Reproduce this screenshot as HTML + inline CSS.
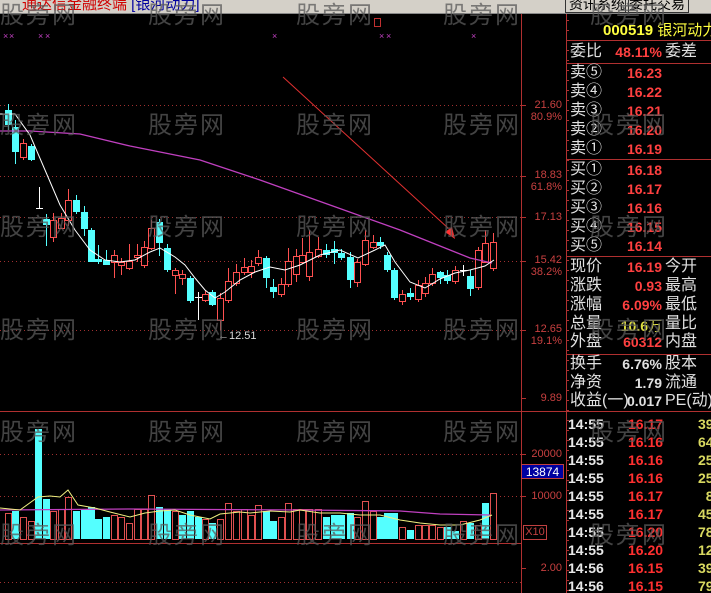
<!DOCTYPE html>
<html><head><meta charset="utf-8"><style>
html,body{margin:0;padding:0;background:#000;width:711px;height:593px;overflow:hidden}
body{position:relative;font-family:"Liberation Sans","Noto Sans CJK SC",sans-serif}
.t{position:absolute;white-space:nowrap}
svg{position:absolute;left:0;top:0}
.wm{position:absolute;color:rgba(90,90,90,0.75);font-size:24px;font-family:"Noto Sans CJK SC","WenQuanYi Zen Hei",sans-serif;letter-spacing:2px}
.r{position:absolute;left:570px;font-size:16px;color:#e0e0e0;font-family:"Liberation Sans","Noto Sans CJK SC",sans-serif;line-height:18px;height:18px}
.v{position:absolute;font-weight:bold;color:#ff4040;font-size:14px;text-align:right;width:70px;left:592px}
.tk{position:absolute;left:568px;font-weight:bold;font-size:14px;color:#e8e8e8;line-height:18px}
.tk b{position:absolute;left:60px;color:#ff3030}
.tk i{position:absolute;left:130px;color:#d8d860;font-style:normal}
.ax{position:absolute;color:#c84040;font-size:11px;text-align:right;width:38px;left:524px;line-height:12px}
</style></head><body>
<div style="position:absolute;left:0;top:0;width:711px;height:13px;background:#d4d0c8;border-bottom:1px solid #888;overflow:hidden">
 <div class="t" style="left:22px;top:-7px;font-size:15px;color:#d00000">通达信金融终端 <span style="color:#0000a0">[银河动力]</span></div>
 <div class="t" style="left:565px;top:-7px;font-size:14px;border:1px solid #333;padding:0 3px;height:18px">资讯系统</div>
 <div class="t" style="left:625px;top:-7px;font-size:14px;border:1px solid #333;padding:0 3px;height:18px">委托交易</div>
</div>
<svg width="711" height="593" id="s"></svg>
<div class="ax" style="top:99px">21.60<br>80.9%</div>
<div class="ax" style="top:169px">18.83<br>61.8%</div>
<div class="ax" style="top:211px">17.13</div>
<div class="ax" style="top:254px">15.42<br>38.2%</div>
<div class="ax" style="top:323px">12.65<br>19.1%</div>
<div class="ax" style="top:392px">9.89</div>
<div class="ax" style="top:448px">20000</div>
<div class="ax" style="top:490px">10000</div>
<div class="ax" style="top:562px">2.00</div>
<div class="t" style="left:521px;top:464px;width:43px;height:15px;background:#0000a0;border:1px solid #c04040;color:#fff;font-size:12px;line-height:15px;text-align:center;box-sizing:border-box">13874</div>
<div class="t" style="left:523px;top:525px;width:22px;height:13px;border:1px solid #c04040;color:#c04040;font-size:11px;line-height:12px;text-align:center">X10</div>
<div class="t" style="left:218px;top:330px;color:#ddd;font-size:11px">←12.51</div>
<div class="t" style="left:603px;top:19px;color:#ffff40;font-size:15px;font-weight:bold">000519 <span style="font-weight:normal">银河动力</span></div>
<div class="r" style="top:43px">委比</div><div class="v" style="top:44px;color:#ff4040">48.11%</div><div class="r" style="top:43px;left:665px">委差</div>
<div class="r" style="top:64px">卖⑤</div><div class="v" style="top:65px">16.23</div>
<div class="r" style="top:83px">卖④</div><div class="v" style="top:84px">16.22</div>
<div class="r" style="top:102px">卖③</div><div class="v" style="top:103px">16.21</div>
<div class="r" style="top:121px">卖②</div><div class="v" style="top:122px">16.20</div>
<div class="r" style="top:140px">卖①</div><div class="v" style="top:141px">16.19</div>
<div class="r" style="top:161px">买①</div><div class="v" style="top:162px">16.18</div>
<div class="r" style="top:180px">买②</div><div class="v" style="top:181px">16.17</div>
<div class="r" style="top:199px">买③</div><div class="v" style="top:200px">16.16</div>
<div class="r" style="top:218px">买④</div><div class="v" style="top:219px">16.15</div>
<div class="r" style="top:237px">买⑤</div><div class="v" style="top:238px">16.14</div>
<div class="r" style="top:258px">现价</div><div class="v" style="top:259px">16.19</div><div class="r" style="top:258px;left:665px">今开</div>
<div class="r" style="top:277px">涨跌</div><div class="v" style="top:278px">0.93</div><div class="r" style="top:277px;left:665px">最高</div>
<div class="r" style="top:296px">涨幅</div><div class="v" style="top:297px">6.09%</div><div class="r" style="top:296px;left:665px">最低</div>
<div class="r" style="top:315px">总量</div><div class="v" style="top:316px;color:#e0e040">10.6<span style="font-weight:normal">万</span></div><div class="r" style="top:315px;left:665px">量比</div>
<div class="r" style="top:333px">外盘</div><div class="v" style="top:334px">60312</div><div class="r" style="top:333px;left:665px">内盘</div>
<div class="r" style="top:355px">换手</div><div class="v" style="top:356px;color:#e0e0e0">6.76%</div><div class="r" style="top:355px;left:665px">股本</div>
<div class="r" style="top:374px">净资</div><div class="v" style="top:375px;color:#e0e0e0">1.79</div><div class="r" style="top:374px;left:665px">流通</div>
<div class="r" style="top:392px">收益(一)</div><div class="v" style="top:393px;color:#e0e0e0">0.017</div><div class="r" style="top:392px;left:665px">PE(动)</div>
<div class="tk" style="top:415px">14:55<b>16.17</b><i>39</i></div>
<div class="tk" style="top:433px">14:55<b>16.16</b><i>64</i></div>
<div class="tk" style="top:451px">14:55<b>16.16</b><i>258</i></div>
<div class="tk" style="top:469px">14:55<b>16.16</b><i>255</i></div>
<div class="tk" style="top:487px">14:55<b>16.17</b><i>&nbsp;&nbsp;8</i></div>
<div class="tk" style="top:505px">14:55<b>16.17</b><i>45</i></div>
<div class="tk" style="top:523px">14:55<b>16.20</b><i>78</i></div>
<div class="tk" style="top:541px">14:55<b>16.20</b><i>124</i></div>
<div class="tk" style="top:559px">14:56<b>16.15</b><i>398</i></div>
<div class="tk" style="top:577px">14:56<b>16.15</b><i>79</i></div>
<div id="w"></div>
<script>
var s=document.getElementById('s'),h='';
function L(x1,y1,x2,y2,c,d){h+='<line x1="'+x1+'" y1="'+y1+'" x2="'+x2+'" y2="'+y2+'" stroke="'+c+'" stroke-width="1"'+(d?' stroke-dasharray="1,3"':'')+'/>';}
function R(x,y,w,hh,f,st){h+='<rect x="'+x+'" y="'+y+'" width="'+w+'" height="'+Math.max(hh,1)+'" fill="'+f+'"'+(st?' stroke="'+st+'"':'')+'/>';}
[105,176,217,261,330].forEach(function(y){L(0,y+.5,521,y+.5,'#a03030',1)});
[454,496,582].forEach(function(y){L(0,y+.5,521,y+.5,'#a03030',1)});
L(0,411.5,711,411.5,'#b03030');L(0,543.5,521,543.5,'#b03030');
L(521.5,14,521.5,593,'#b03030');L(566.5,14,566.5,593,'#b03030');
L(566,40.5,711,40.5,'#b03030');L(566,63.5,711,63.5,'#b03030');L(566,159.5,711,159.5,'#b03030');L(566,256.5,711,256.5,'#b03030');L(566,354.5,711,354.5,'#b03030');
[105,176,217,261,330,398,454,496,568].forEach(function(y){L(521,y+.5,526,y+.5,'#b03030')});
for(var y=20;y<593;y+=10)L(566,y+.5,569,y+.5,'#b03030');
h+='<rect x="374.5" y="18.5" width="6" height="8" fill="none" stroke="#c03030"/>';
[3,9,38,45,272,379,386,471].forEach(function(x){h+='<text x="'+x+'" y="39" fill="#c040c0" font-size="9" font-family="Liberation Sans">×</text>'});
var C=[[8,110,125,104,130],[15,127,152,120,164],[23,157,143,139,160],[31,146,160,144,161],[39,208,208,187,208],[46,219,225,214,246],[53,237,220,213,242],[61,228,218,213,229],[68,220,200,189,226],[76,200,212,195,214],[84,212,229,206,236],[91,230,262,228,262],[98,259,262,245,264],[106,260,265,250,265],[114,262,255,250,278],[121,265,262,258,275],[129,268,261,244,270],[137,257,255,244,262],[144,265,247,241,268],[151,248,228,220,250],[159,222,243,219,256],[167,248,270,244,272],[175,275,270,268,294],[182,278,274,270,285],[190,278,301,276,303],[198,297,297,292,320],[205,300,294,290,302],[212,292,305,290,306],[220,320,298,293,330],[228,300,281,268,303],[236,283,272,264,286],[244,272,267,258,275],[251,272,266,260,278],[258,263,257,250,266],[266,258,278,256,288],[273,287,292,279,298],[281,294,284,278,297],[288,284,261,248,287],[296,274,256,249,282],[302,262,255,238,264],[309,276,252,230,281],[318,256,249,237,258],[326,250,255,244,258],[334,249,253,241,264],[341,253,258,249,260],[350,257,280,252,288],[357,282,262,259,287],[365,264,240,230,266],[373,247,242,235,249],[380,242,246,237,249],[387,255,270,252,272],[394,270,298,268,300],[402,301,294,290,305],[410,293,297,288,300],[418,299,285,280,302],[425,293,283,277,297],[432,283,274,268,286],[440,272,278,271,284],[447,275,281,270,284],[455,281,270,266,284],[463,270,270,265,276],[470,276,289,270,296],[478,287,250,247,290],[485,262,243,230,263],[493,268,242,233,271]];
C.forEach(function(c){var x=c[0],o=c[1],cl=c[2],up=cl<o;var col=up?'#ff5050':'#54ffff';if(o==cl)col='#fff';
L(x+.5,c[3],x+.5,Math.min(o,cl),col);L(x+.5,Math.max(o,cl),x+.5,c[4],col);
if(o==cl)L(x-3,o+.5,x+4,o+.5,'#fff');else if(up)h+='<rect x="'+(x-2.5)+'" y="'+(cl+.5)+'" width="6" height="'+(o-cl)+'" fill="#000" stroke="#ff5050"/>';else R(x-3,o,7,cl-o,'#54ffff');});
h+='<polyline fill="none" stroke="#c040c0" stroke-width="1.3" points="0,131 30,131 80,134 130,146 200,160 260,180 330,205 400,230 450,250 470,258 492,263"/>';
h+='<polyline fill="none" stroke="#fff" stroke-width="1" points="0,114 15,114 30,135 45,170 60,205 75,230 90,250 105,260 120,262 135,260 150,252 160,248 175,257 185,265 195,278 205,290 215,298 225,292 240,280 255,272 270,267 285,270 300,265 320,255 340,250 358,258 375,250 385,245 395,262 410,282 425,288 440,279 455,273 470,270 485,266 494,260"/>';
L(283,77,448,228,'#e03030');h+='<polygon points="445,232 452,227 455,239" fill="#ff3030"/>';
var V=[[8,26,1],[15,28,0],[23,22,1],[31,18,1],[38,110,0],[46,40,0],[53,28,1],[61,30,1],[68,42,1],[76,28,0],[84,30,0],[91,32,0],[98,20,0],[106,22,0],[114,24,1],[121,22,1],[129,16,1],[137,30,1],[144,30,1],[151,44,1],[159,32,0],[167,30,0],[175,28,1],[182,24,0],[190,28,0],[198,22,0],[205,20,1],[212,16,0],[220,20,1],[228,36,1],[236,28,1],[244,30,1],[251,24,1],[258,34,1],[266,28,0],[273,18,0],[281,22,1],[288,36,1],[296,30,1],[302,30,1],[309,30,1],[318,30,1],[326,22,0],[334,24,0],[341,24,0],[350,26,0],[357,22,1],[365,38,1],[373,28,1],[380,22,0],[387,26,0],[394,26,0],[402,12,1],[410,9,0],[418,14,1],[425,14,1],[432,14,1],[440,12,1],[447,12,0],[455,8,0],[463,18,1],[470,16,0],[478,14,1],[485,36,0],[493,46,1]];
V.forEach(function(v){var x=v[0],t=539-v[1];if(v[2])h+='<rect x="'+(x-2.5)+'" y="'+(t+.5)+'" width="6" height="'+v[1]+'" fill="#000" stroke="#e05050"/>';else R(x-3,t,7,v[1],'#54ffff');});
h+='<polyline fill="none" stroke="#c040c0" stroke-width="1.3" points="0,510 130,509 300,510 400,511 440,514 490,515"/>';
h+='<polyline fill="none" stroke="#f0f080" stroke-width="1" points="0,508 20,510 38,497 50,496 60,497 68,490 78,505 95,508 110,512 130,517 145,513 160,511 175,510 190,515 210,519 220,514 240,512 250,513 270,511 290,512 300,510 320,513 340,513 360,515 380,515 400,520 420,523 440,525 460,525 480,520 492,515"/>';
s.innerHTML=h;
var w='';[-5,105,207,310,412,515].forEach(function(y){[0,148,296,443,590].forEach(function(x){w+='<div class="wm" style="left:'+x+'px;top:'+y+'px">股旁网</div>'})});
document.getElementById('w').innerHTML=w;
</script>
</body></html>
